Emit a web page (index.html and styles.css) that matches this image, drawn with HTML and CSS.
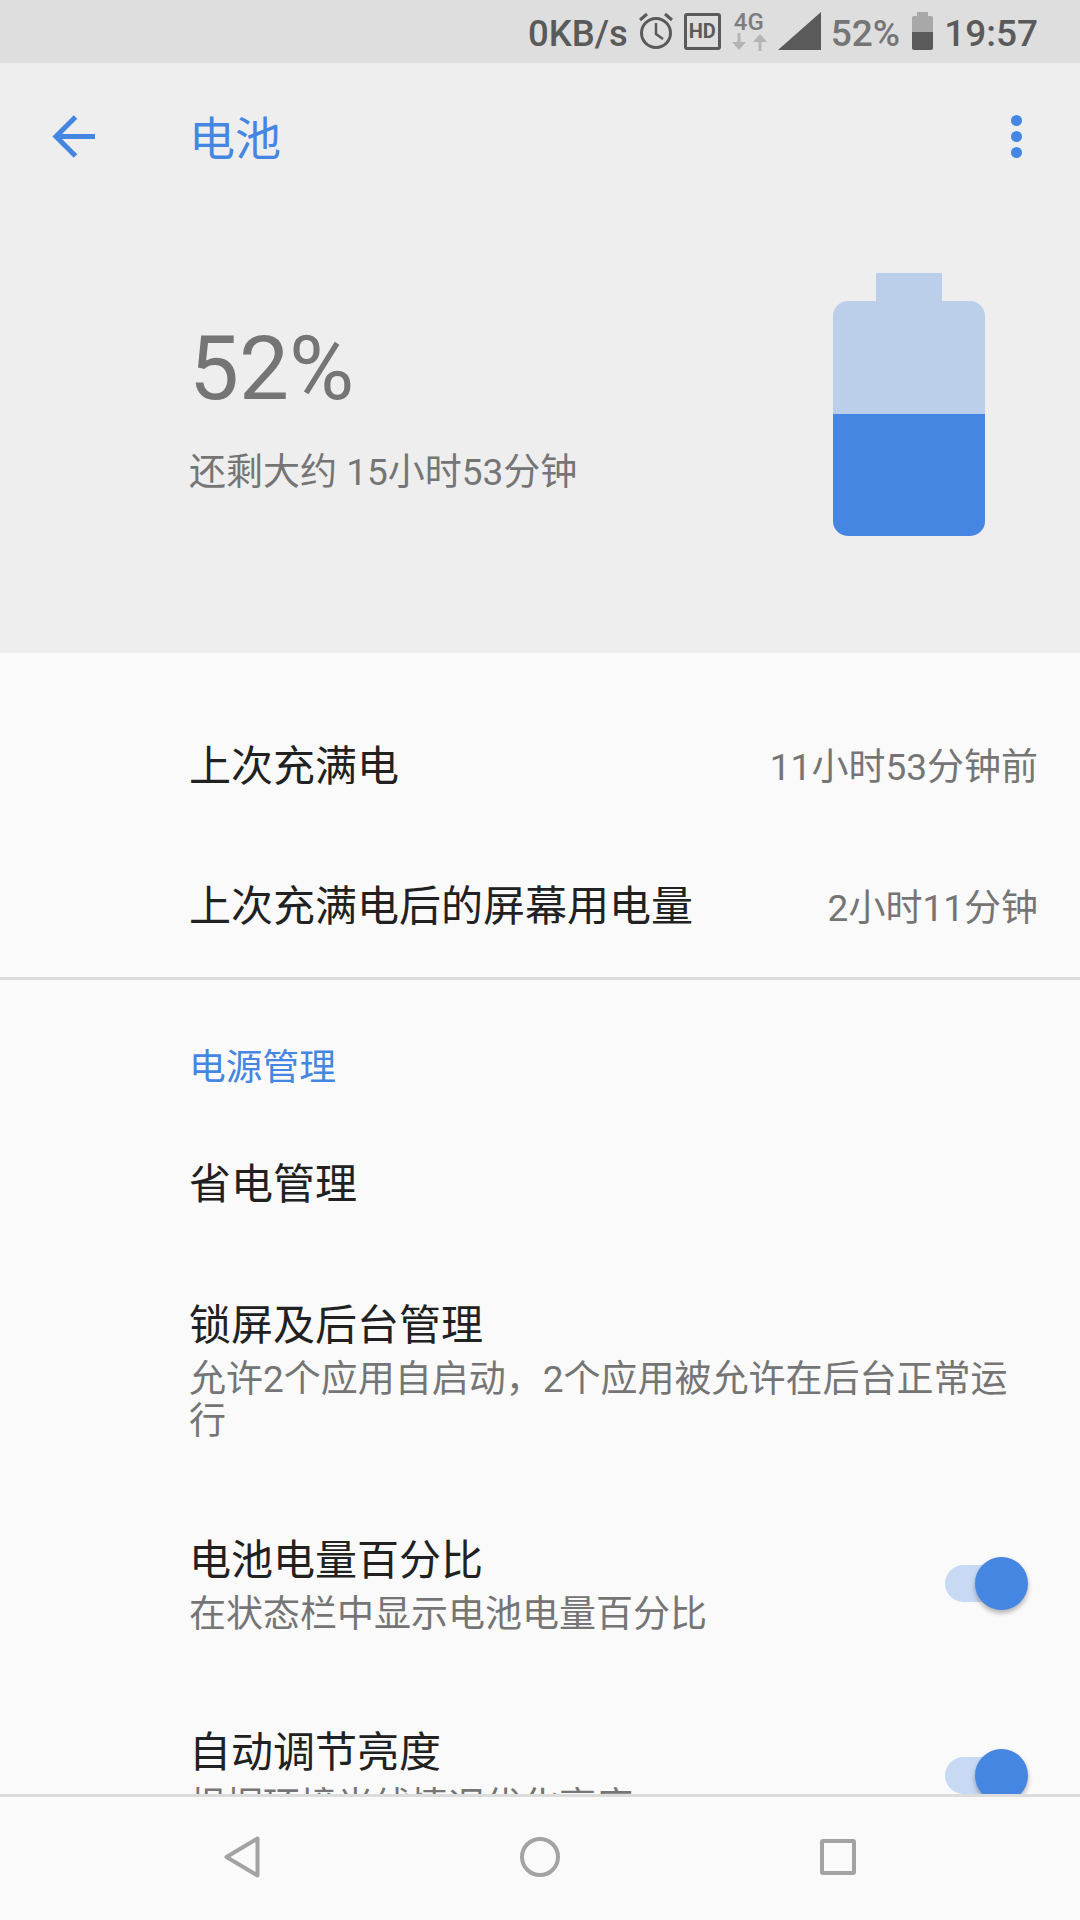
FILE: index.html
```html
<!DOCTYPE html>
<html lang="zh-CN">
<head>
  <meta charset="UTF-8" />
  <meta name="viewport" content="width=device-width, initial-scale=1.0"/>
  <title>电池</title>
  <link rel="stylesheet" href="styles.css">
</head>
<body>
  <div class="screen">

    <div class="status-bar">
      <span class="net-speed">0KB/s</span>
      <svg class="ic-clock" width="36" height="38" viewBox="0 0 36 38">
        <circle cx="18" cy="21" r="14.5" fill="none" stroke="#5a5a5a" stroke-width="3"/>
        <path d="M18 11v11l7 5" fill="none" stroke="#5a5a5a" stroke-width="2.5"/>
        <path d="M2 8l7-6M34 8l-7-6" fill="none" stroke="#5a5a5a" stroke-width="3"/>
      </svg>
      <span class="ic-hd">HD</span>
      <div class="ic-net">
        <span class="net-type">4G</span>
        <svg width="36" height="18" viewBox="0 0 36 18">
          <path d="M8 0v11" fill="none" stroke="#b4b4b4" stroke-width="3"/>
          <path d="M1 9h14l-7 8z" fill="#b4b4b4"/>
          <path d="M29 18V7" fill="none" stroke="#b4b4b4" stroke-width="3"/>
          <path d="M22 9h14l-7-8z" fill="#b4b4b4"/>
        </svg>
      </div>
      <svg class="ic-signal" width="43" height="38" viewBox="0 0 43 38">
        <path d="M0 38L43 0v38z" fill="#5a5a5a"/>
      </svg>
      <span class="status-pct">52%</span>
      <div class="ic-battery"><div class="ic-battery-cap"></div><div class="ic-battery-body"></div></div>
      <span class="clock">19:57</span>
    </div>

    <div class="content">
      <div class="hero">
        <div class="toolbar">
          <svg class="back" width="44" height="44" viewBox="0 0 44 44">
            <path d="M43 21.500H4M23.500 2L4 21.500 23.500 41" fill="none" stroke="#4586e2" stroke-width="5"/>
          </svg>
          <h1>电池</h1>
          <div class="more"><i></i><i></i><i></i></div>
        </div>
        <div class="summary">
          <div class="summary-text">
            <div class="percent">52%</div>
            <div class="remaining">还剩大约 15小时53分钟</div>
          </div>
          <div class="battery">
            <div class="battery-cap"></div>
            <div class="battery-body"><div class="battery-fill"></div></div>
          </div>
        </div>
      </div>

      <div class="group group-usage">
        <div class="row">
          <span class="row-title">上次充满电</span>
          <span class="row-value">11小时53分钟前</span>
        </div>
        <div class="row">
          <span class="row-title">上次充满电后的屏幕用电量</span>
          <span class="row-value">2小时11分钟</span>
        </div>
      </div>

      <div class="group">
        <div class="section-title">电源管理</div>
        <div class="row">
          <span class="row-title">省电管理</span>
        </div>
        <div class="row row-tall">
          <div>
            <div class="row-title">锁屏及后台管理</div>
            <div class="row-sub">允许2个应用自启动，2个应用被允许在后台正常运行</div>
          </div>
        </div>
        <div class="row row-double">
          <div>
            <div class="row-title">电池电量百分比</div>
            <div class="row-sub">在状态栏中显示电池电量百分比</div>
          </div>
          <div class="switch"><div class="switch-thumb"></div></div>
        </div>
        <div class="row row-double">
          <div>
            <div class="row-title">自动调节亮度</div>
            <div class="row-sub">根据环境光线情况优化亮度</div>
          </div>
          <div class="switch"><div class="switch-thumb"></div></div>
        </div>
      </div>
    </div>

    <div class="nav-bar">
      <svg width="36" height="42" viewBox="0 0 36 42">
        <path d="M33.500 2.500v37L2.500 21z" fill="none" stroke="#a3a3a3" stroke-width="4" stroke-linejoin="round"/>
      </svg>
      <svg width="40" height="40" viewBox="0 0 40 40">
        <circle cx="20" cy="20" r="18" fill="none" stroke="#a3a3a3" stroke-width="4"/>
      </svg>
      <svg width="36" height="36" viewBox="0 0 36 36">
        <rect x="2" y="2" width="32" height="32" rx="1" fill="none" stroke="#a3a3a3" stroke-width="4"/>
      </svg>
    </div>

  </div>
</body>
</html>
```

FILE: styles.css
```css
* {
  box-sizing: border-box;
}

body {
  margin: 0;
  background: #fafafa;
  font-family: Roboto, "Noto Sans CJK SC", sans-serif;
}

.screen {
  width: 1080px;
  height: 1920px;
  display: flex;
  flex-direction: column;
  overflow: hidden;
}

/* status bar */
.status-bar {
  height: 63px;
  flex: none;
  background: #dedede;
  display: flex;
  align-items: flex-start;
  padding: 12px 42px 0 0;
  justify-content: flex-end;
  color: #5a5a5a;
}

.net-speed,
.clock,
.status-pct {
  font-size: 37px;
  line-height: 44px;
  font-weight: 500;
}

.net-speed {
  font-size: 36.500px;
  margin-right: 10px;
}

.ic-clock {
  margin-right: 10px;
}

.ic-hd {
  width: 37px;
  height: 37px;
  margin-top: 1px;
  margin-right: 10px;
  border: 3px solid #5a5a5a;
  border-radius: 3px;
  font-size: 20px;
  line-height: 31px;
  font-weight: 700;
  text-align: center;
}

.ic-net {
  width: 36px;
  margin-right: 11px;
  color: #7d7d7d;
}

.net-type {
  display: block;
  font-size: 24px;
  line-height: 21px;
  font-weight: 500;
  text-align: center;
}

.ic-net svg {
  display: block;
}

.ic-signal {
  margin-right: 10px;
}

.status-pct {
  color: #757575;
  margin-right: 12px;
}

.ic-battery {
  width: 21px;
  margin-right: 11px;
}

.ic-battery-cap {
  width: 11px;
  height: 4px;
  margin: 0 auto;
  background: #a8a8a8;
}

.ic-battery-body {
  height: 34px;
  border-radius: 2px;
  background: linear-gradient(#a8a8a8 16px, #5a5a5a 16px);
}

/* scrolling part, cut off by the nav bar */
.content {
  flex: 1;
  min-height: 0;
  overflow: hidden;
}

.hero {
  height: 590px;
  background: #eeeeee;
}

.toolbar {
  height: 147px;
  display: flex;
  align-items: center;
  padding-left: 52px;
}

.back {
  flex: none;
}

.toolbar h1 {
  margin: 0 0 4px 93px;
  font-size: 46px;
  font-weight: 400;
  color: #4586e2;
}

.more {
  margin-left: auto;
  margin-right: 58px;
  display: flex;
  flex-direction: column;
  gap: 5px;
}

.more i {
  display: block;
  width: 11px;
  height: 11px;
  border-radius: 50%;
  background: #4586e2;
}

.summary {
  display: flex;
  justify-content: space-between;
  padding: 63px 95px 0 189px;
}

.percent {
  margin-top: 41px;
  font-size: 89px;
  line-height: 110px;
  color: #757575;
}

.remaining {
  margin-top: 24px;
  font-size: 37px;
  line-height: 50px;
  color: #757575;
}

.battery {
  width: 152px;
}

.battery-cap {
  width: 66px;
  height: 28px;
  margin: 0 auto;
  background: #bbcfea;
}

.battery-body {
  height: 235px;
  padding-top: 113px;
  border-radius: 15px;
  background: #bbcfea;
  overflow: hidden;
}

.battery-fill {
  height: 122px;
  background: #4586e2;
}

/* list */
.group-usage {
  padding-top: 43px;
  border-bottom: 3px solid #dcdcdc;
}

.row {
  height: 141px;
  padding: 0 42px 0 189px;
  display: flex;
  align-items: center;
  justify-content: space-between;
}

.group-usage .row:last-child {
  height: 140px;
}

.row-tall,
.row-double {
  padding-bottom: 7px;
}

.row-tall {
  height: 237px;
  padding-bottom: 6px;
}

.row-double {
  height: 192px;
}

.row-title {
  font-size: 42px;
  line-height: 56px;
  color: #212121;
}

.row-title + .row-sub {
  margin-top: 5px;
}

.row-value {
  margin-bottom: 5px;
  font-size: 37px;
  color: #757575;
}

.row-sub {
  font-size: 37px;
  line-height: 42px;
  color: #757575;
}

.section-title {
  padding: 63px 0 0 189px;
  height: 134px;
  font-size: 36.750px;
  line-height: 50px;
  color: #4586e2;
}

.switch {
  position: relative;
  flex: none;
  width: 74px;
  height: 37px;
  margin-right: 19px;
  margin-bottom: 3px;
  border-radius: 19px;
  background: #c8daf3;
}

.switch-thumb {
  position: absolute;
  right: -9px;
  top: -8px;
  width: 53px;
  height: 53px;
  border-radius: 50%;
  background: #4586e2;
  box-shadow: 0 3px 5px rgba(0, 0, 0, 0.3);
}

/* navigation keys */
.nav-bar {
  height: 126px;
  flex: none;
  position: relative;
  background: #fafafa;
  border-top: 3px solid #dcdcdc;
  display: flex;
  align-items: center;
  padding: 0 224px 3px;
  justify-content: space-between;
}
```
